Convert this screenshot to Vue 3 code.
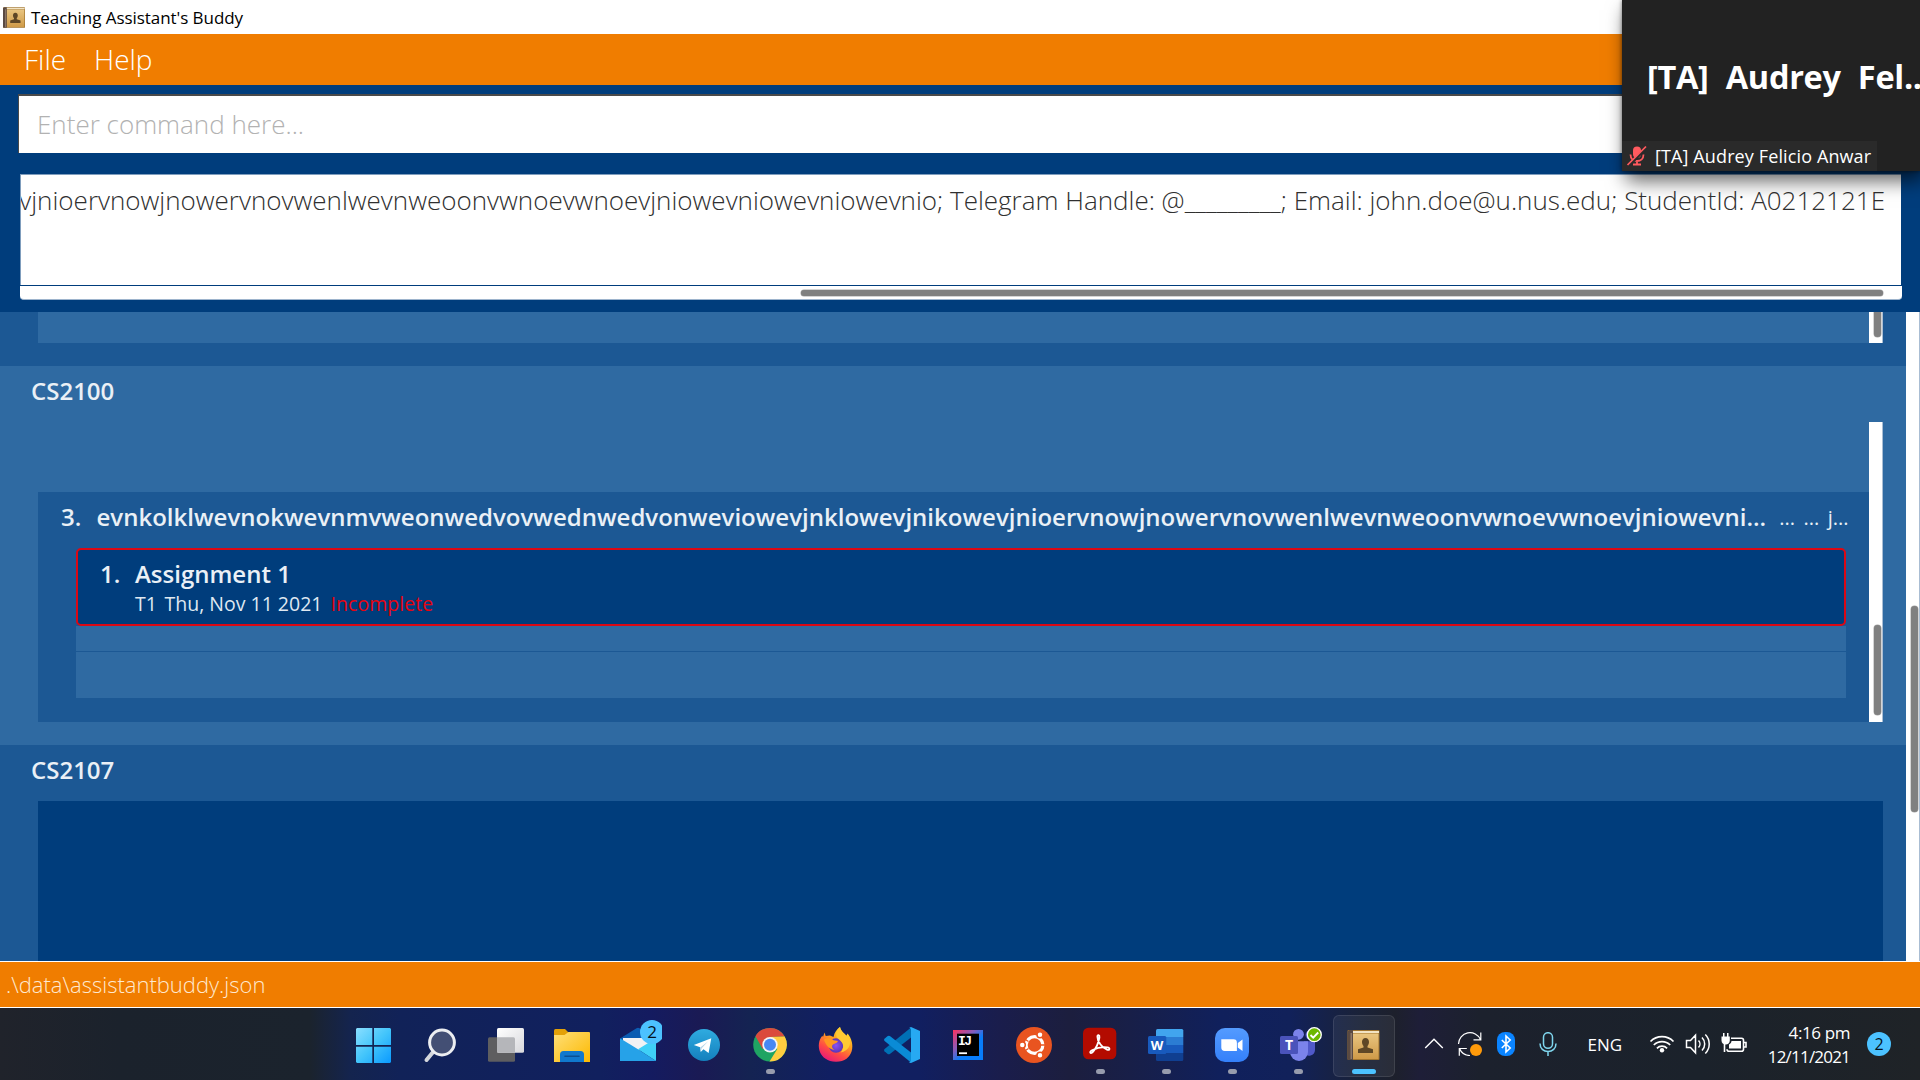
<script setup>
const result =
  'vjnioervnowjnowervnovwenlwevnweoonvwnoevwnoevjniowevniowevniowevnio; Telegram Handle: @_________; Email: john.doe@u.nus.edu; StudentId: A0212121E'
const student =
  'evnkolklwevnokwevnmvweonwedvovwednwedvonweviowevjnklowevjnikowevjnioervnowjnowervnovwenlwevnweoonvwnoevwnoevjniowevni...'
const tags = ['...', '...', 'j...']
</script>

<template>
  <div class="desktop">
    <header class="titlebar">
      <svg class="app-icon" width="22" height="21" viewBox="0 0 32 30">
        <use href="#book" />
      </svg>
      <span>Teaching Assistant's Buddy</span>
    </header>

    <nav class="menubar">
      <span class="menu-file">File</span>
      <span>Help</span>
    </nav>

    <section class="command">
      <div class="field">Enter command here...</div>
      <div class="result">
        <div class="result-text"><span>{{ result }}</span></div>
        <div class="hscroll"><i></i></div>
      </div>
    </section>

    <main class="modules">
      <div class="list">
        <div class="module first">
          <div class="strip"></div>
          <div class="vscroll"><i></i></div>
        </div>

        <div class="module second">
          <h2>CS2100</h2>
          <div class="students">
            <div class="student">
              <div class="student-head">
                <span class="num">3.</span>
                <span class="name">{{ student }}</span>
                <span v-for="(t, i) in tags" :key="i" class="tag">{{ t }}</span>
              </div>
              <div class="tasks">
                <div class="task">
                  <span class="num">1.</span>
                  <div>
                    <h3>Assignment 1</h3>
                    <p>
                      <span class="tag-name">T1</span><span class="date">Thu, Nov 11 2021</span><span class="state">Incomplete</span>
                    </p>
                  </div>
                </div>
                <div class="empty short"></div>
                <div class="empty"></div>
              </div>
            </div>
            <div class="vscroll"><i></i></div>
          </div>
        </div>

        <div class="module third">
          <h2>CS2107</h2>
          <div class="blank"></div>
        </div>
      </div>
      <div class="page-scroll"><i></i></div>
    </main>

    <footer class="status">.\data\assistantbuddy.json</footer>

    <div class="taskbar">
      <div class="apps">
        <div class="app">
          <svg viewBox="0 0 48 48">
            <defs>
              <linearGradient id="win" gradientUnits="userSpaceOnUse" x1="6" y1="8" x2="41" y2="43">
                <stop offset="0" stop-color="#8adfff" /><stop offset=".5" stop-color="#43c5fb" /><stop offset="1" stop-color="#0a9aff" />
              </linearGradient>
            </defs>
            <path fill="url(#win)" d="M7 8h15.3v17H6V9zM24 8h16l1 1v16H24zM6 26.8h16.3V43H7l-1-1zM24 26.8h17V42l-1 1H24z" />
          </svg>
        </div>
        <div class="app">
          <svg viewBox="0 0 48 48">
            <path d="M17.500 31.500 10.500 40" stroke="#d4d7dc" stroke-width="4" stroke-linecap="round" />
            <circle cx="26" cy="22.500" r="12.400" fill="#434f74" stroke="#eceef1" stroke-width="3" />
          </svg>
        </div>
        <div class="app">
          <svg viewBox="0 0 48 48">
            <defs>
              <linearGradient id="tv" x1="0" y1="0" x2="1" y2="1">
                <stop offset="0" stop-color="#fff" /><stop offset="1" stop-color="#d8d8dc" />
              </linearGradient>
            </defs>
            <rect x="6" y="17.300" width="27" height="24.500" rx="1.500" fill="#5e5e60" />
            <rect x="15" y="8" width="27" height="24.700" rx="1.500" fill="url(#tv)" />
            <path d="M15 17.300h16.500a1.500 1.500 0 0 1 1.500 1.500v13.900H16.500a1.500 1.500 0 0 1-1.500-1.500z" fill="#b5b6ba" />
          </svg>
        </div>
        <div class="app">
          <svg viewBox="0 0 48 48">
            <defs>
              <linearGradient id="fo" x1="0" y1="0" x2="1" y2="1">
                <stop offset="0" stop-color="#ffdf79" /><stop offset="1" stop-color="#fcb900" />
              </linearGradient>
            </defs>
            <path d="M6 10.500A1.500 1.500 0 0 1 7.500 9H17l4 4v6H6z" fill="#e3a008" />
            <path d="M6 15h10.500l4-3H41a1 1 0 0 1 1 1v29H6z" fill="url(#fo)" />
            <path d="M12 42V34.500A3.500 3.500 0 0 1 15.500 31h17a3.500 3.500 0 0 1 3.500 3.500V42z" fill="#1078cd" />
            <path d="M17 36.300h14" stroke="#0b4f92" stroke-width="1.600" stroke-linecap="round" />
          </svg>
        </div>
        <div class="app">
          <svg viewBox="0 0 48 48">
            <path d="M6 18.500 22.500 8.200a3 3 0 0 1 3 0L42 18.500 24 30z" fill="#0b5cb2" />
            <path d="M9 18h30v8L24 31 9 22z" fill="#f2f2f4" />
            <path d="M42 18.300 24 29.300 42 41z" fill="#3fd0f8" />
            <path d="M6 41V18.300L24 29.300 42 41z" fill="#26a2e8" />
            <circle cx="38" cy="12" r="12" fill="#4cc2ff" />
          </svg>
          <span class="badge">2</span>
        </div>
        <div class="app">
          <svg viewBox="0 0 48 48">
            <defs>
              <linearGradient id="tg" x1="0" y1="0" x2="0" y2="1">
                <stop offset="0" stop-color="#2fabe0" /><stop offset="1" stop-color="#1480bd" />
              </linearGradient>
            </defs>
            <circle cx="24" cy="25" r="16" fill="url(#tg)" />
            <path d="M13.800 25 31.300 18.300 28.600 33 23.500 29.200 20.700 31.900 20.200 27.200z" fill="#fff" />
            <path d="M20.300 27.400 28.200 21.300 21.700 28.300 20.800 31.600z" fill="#b5d5e8" />
          </svg>
        </div>
        <div class="app running">
          <svg viewBox="0 0 48 48">
            <circle cx="24" cy="24.700" r="16.800" fill="#1fa463" />
            <path d="M9.450 16.300A16.800 16.800 0 0 1 38.700 16.600L24 17 16.700 28.900z" fill="#db4a3d" />
            <path d="M38.700 16.600A16.800 16.800 0 0 1 23.500 41.500L31.300 28.900 24 17z" fill="#ffcd40" />
            <circle cx="24" cy="24.700" r="7.700" fill="#f4f4f4" />
            <circle cx="24" cy="24.700" r="6" fill="#4688f4" />
          </svg>
        </div>
        <div class="app">
          <svg viewBox="0 0 48 48">
            <defs>
              <linearGradient id="ff" x1=".85" y1="0" x2=".3" y2="1">
                <stop offset="0" stop-color="#fff23c" /><stop offset=".4" stop-color="#ffa21e" /><stop offset=".72" stop-color="#ff4a45" /><stop offset="1" stop-color="#e6197a" />
              </linearGradient>
              <radialGradient id="fg"><stop offset="0" stop-color="#8a52f5" /><stop offset="1" stop-color="#5b35b5" /></radialGradient>
            </defs>
            <path d="M12.500 12.400 13.700 16 18 15.600 21.500 17C22.500 12 25 9 28 7c1 5 4 6 6 9.500l1.600-3C44 23 42 41.700 24 41.700 7 41.700 3 24.500 10.300 15.800L11 17z" fill="url(#ff)" />
            <circle cx="24" cy="25.500" r="7.300" fill="url(#fg)" />
            <path d="M12 19.500c4-2.500 8-1 9.500.8l4.500.6c-1 2.500-4 2.400-5.500 4-1 1.300-.5 3.500 2 4.800-5.500 0-9-5-10.500-10.200z" fill="#ff9820" />
            <path d="M28 7c-4.500 4-5.500 9-1 12.500 5 3.500 5.500 9 1.500 13 8-1.500 11-8 9-14C35 15 29 12 28 7z" fill="#ffc932" />
          </svg>
        </div>
        <div class="app">
          <svg viewBox="0 0 48 48">
            <path d="M6.500 31.200 9.400 33.800a2 2 0 0 0 2.500.1L33 17.500V7.500L6.600 29a1.500 1.500 0 0 0-.1 2.200z" fill="#0070b5" />
            <path d="M6.500 18.800 9.400 16.200a2 2 0 0 1 2.500-.1L33 32.500v10L6.600 21a1.500 1.500 0 0 1-.1-2.200z" fill="#0a8bd6" />
            <path d="M33 7 42 11v28l-9 4c-1.500-.3-2.500-1.200-2.500-1.200.9.500 2.500.1 2.500-1.500V9.700c0-1.600-1.600-2-2.500-1.500z" fill="#27a9f2" />
          </svg>
        </div>
        <div class="app">
          <svg viewBox="0 0 48 48">
            <defs>
              <linearGradient id="ij" x1="0" y1="0" x2="1" y2="1">
                <stop offset="0" stop-color="#fe315d" /><stop offset=".35" stop-color="#8a5ab8" /><stop offset=".6" stop-color="#087cfa" /><stop offset="1" stop-color="#087cfa" />
              </linearGradient>
            </defs>
            <rect x="9" y="10" width="30" height="30" fill="url(#ij)" />
            <rect x="13" y="13.700" width="22" height="22.300" fill="#000" />
            <path d="M15 33.200h8" stroke="#fff" stroke-width="1.800" />
            <text class="mono" x="14" y="25.200" font-size="13" font-weight="700" textLength="14" fill="#fff">IJ</text>
          </svg>
        </div>
        <div class="app">
          <svg viewBox="0 0 48 48">
            <circle cx="24" cy="25" r="18" fill="#e95420" />
            <circle cx="24.500" cy="25" r="8.400" fill="none" stroke="#fff" stroke-width="3.200" />
            <g stroke="#e95420" stroke-width="1.500" fill="#fff">
              <circle cx="12.300" cy="25" r="3" /><circle cx="30" cy="14.800" r="3" /><circle cx="30" cy="35.200" r="3" />
            </g>
            <path d="M14.500 19 18.500 21.500M14.500 31 18.500 28.500M31 25h4.500" stroke="#e95420" stroke-width="1.300" />
          </svg>
        </div>
        <div class="app running">
          <svg viewBox="0 0 48 48">
            <rect x="7" y="7.700" width="33.300" height="31.600" rx="5.500" fill="#b30b00" />
            <path d="M14.500 31.500c-1 1.800 1 2.200 2.600.2 3-3.700 5.500-9.200 6.300-14.200.4-2.800-2-3.200-2-.8 0 4.800 4.500 11 9.600 13 3 1.100 3.400-2 .3-2.400-4.500-.5-10.500.5-14.700 2.700-1 .5-1.700 1-2.100 1.500z" fill="none" stroke="#fff" stroke-width="1.800" />
          </svg>
        </div>
        <div class="app running">
          <svg viewBox="0 0 48 48">
            <path d="M14 17V10.500A1.500 1.500 0 0 1 15.500 9h24.300a1.500 1.500 0 0 1 1.500 1.500V17z" fill="#41a5ee" />
            <path d="M14 17h27.300v8H14z" fill="#2b7cd3" />
            <path d="M14 25h27.300v8H14z" fill="#185abd" />
            <path d="M14 33h27.300v6.500a1.500 1.500 0 0 1-1.500 1.500H15.500a1.500 1.500 0 0 1-1.500-1.500z" fill="#103f91" />
            <rect x="6" y="16" width="18.300" height="18" rx="1.500" fill="#185abd" />
            <text x="15.100" y="29.700" text-anchor="middle" font-size="13" font-weight="700" fill="#fff">W</text>
          </svg>
        </div>
        <div class="app running">
          <svg viewBox="0 0 48 48">
            <defs>
              <linearGradient id="zm" x1="0" y1="0" x2="0" y2="1">
                <stop offset="0" stop-color="#549bff" /><stop offset="1" stop-color="#3480fa" />
              </linearGradient>
            </defs>
            <rect x="7" y="8" width="34" height="34" rx="10" fill="url(#zm)" />
            <path d="M13.300 19.300h12.200a3.400 3.400 0 0 1 3.400 3.400V31H16.700a3.400 3.400 0 0 1-3.400-3.400zM29.800 23l4.700-3.500v11.400L29.800 27.500z" fill="#fff" />
          </svg>
        </div>
        <div class="app running">
          <svg viewBox="0 0 48 48">
            <circle cx="36" cy="15" r="4.500" fill="#5059c9" />
            <path d="M30 21.300h11V30a6 6 0 0 1-11 3z" fill="#5059c9" />
            <circle cx="24.500" cy="14.300" r="5.400" fill="#7b83eb" />
            <path d="M16 21.300h18V32a9 9 0 0 1-18 0z" fill="#7b83eb" />
            <rect x="6" y="16" width="18" height="18" rx="1.500" fill="#4a53bb" />
            <text x="15" y="29.700" text-anchor="middle" font-size="14" font-weight="700" fill="#fff">T</text>
            <circle cx="40.300" cy="14.700" r="7" fill="#6bb700" stroke="#fff" stroke-width="1.300" />
            <path d="M36.500 15 39.200 17.700 44.200 12.500" fill="none" stroke="#fff" stroke-width="1.900" />
          </svg>
        </div>
        <div class="app active">
          <svg viewBox="0 0 48 48">
            <defs>
              <linearGradient id="bk" x1="0" y1="0" x2="0" y2="1">
                <stop offset="0" stop-color="#e9c580" /><stop offset="1" stop-color="#cf9a48" />
              </linearGradient>
              <g id="book">
                <rect width="32" height="30" rx="1" fill="#a1752f" />
                <path d="M5 3.500h26V29H5z" fill="url(#bk)" />
                <path d="M3 1h28.500v2H3z" fill="#f2e3c2" />
                <path d="M0 1 2 0h3.500v30H1l-1-1z" fill="#5a4a42" />
                <path d="M3 3h1.500v26H3z" fill="#8c7868" />
                <path d="M18 8c2.300 0 3.500 1.700 3.500 4 0 1.800-.7 3-1.500 3.900v1.600l5.500 1.800V23H10.500v-3.700l5.500-1.800v-1.600c-.8-.9-1.500-2.100-1.500-3.900 0-2.300 1.200-4 3.500-4z" fill="#5e4726" />
              </g>
            </defs>
            <use href="#book" x="7.500" y="10" />
          </svg>
        </div>
      </div>

      <div class="tray">
        <svg class="ic" width="36" viewBox="0 0 36 24"><path d="M9.200 16 18 7.300 26.800 16" fill="none" stroke="#fff" stroke-width="1.400" /></svg>
        <svg class="ic" width="36" viewBox="0 0 36 24">
          <path d="M6.500 12A11.500 11.500 0 0 1 28.500 7.500M28.800 0.500v7.300h-7.300M18 23.500A11.500 11.500 0 0 1 7.500 16.500M7.300 23.700v-7.200h7.500" fill="none" stroke="#fff" stroke-width="1.200" />
          <circle cx="24" cy="18" r="6" fill="#ff9a0a" />
        </svg>
        <svg class="ic" width="36" viewBox="0 0 36 24">
          <rect x="9" y="0" width="18" height="24" rx="8" fill="#0a84ff" />
          <path d="M13.800 8 22.200 16 18 20V4l4.200 4-8.400 8" fill="none" stroke="#fff" stroke-width="1.600" />
        </svg>
        <svg class="ic" width="48" viewBox="0 0 48 24">
          <rect x="19.500" y=".7" width="9" height="15.500" rx="4.500" fill="none" stroke="#7fd6ee" stroke-width="1.500" />
          <path d="M16 11.500c0 5 3.500 8 8 8s8-3 8-8M24 19.500V24" fill="none" stroke="#7fd6ee" stroke-width="1.500" />
        </svg>
        <span class="lang">ENG</span>
        <svg class="ic" width="36" viewBox="0 0 36 24">
          <g fill="none" stroke="#fff" stroke-width="1.700">
            <path d="M6.500 9.500A16.200 16.200 0 0 1 29.500 9.500M9.800 13A11.600 11.600 0 0 1 26.200 13M12.900 16.300A7.200 7.200 0 0 1 23.100 16.300" />
          </g>
          <circle cx="18" cy="18.300" r="2.200" fill="#fff" />
        </svg>
        <svg class="ic" width="36" viewBox="0 0 36 24">
          <path d="M6.500 8.500h4l5-5.300v17.600l-5-5.300h-4zM18.500 8.500a5 5 0 0 1 0 7M22 5.500a9.200 9.200 0 0 1 0 13M25.300 2.500a13.500 13.500 0 0 1 0 19" fill="none" stroke="#fff" stroke-width="1.500" />
        </svg>
        <svg class="ic" width="36" viewBox="1 0 36 24">
          <path d="M16 6.300h10.500a2 2 0 0 1 2 2v8.900a2 2 0 0 1-2 2H14a2 2 0 0 1-2-2M28.500 10.500H31v4.500h-2.500M9.500 12v8" fill="none" stroke="#fff" stroke-width="1.600" />
          <path d="M16.500 9h9.500v7.600H14V12.500c1.500-1 2.500-2 2.500-3.500zM6.500 4.500h8.300v4c0 2.500-1.800 4-4.100 4s-4.200-1.500-4.200-4zM8 1h1.500v4H8zM12 1h1.500v4H12z" fill="#fff" />
        </svg>
        <div class="clock"><span>4:16 pm</span><span class="day">12/11/2021</span></div>
        <span class="notif">2</span>
      </div>
    </div>

    <aside class="call">
      <strong>[TA] Audrey Fel...</strong>
      <div class="caption">
        <svg width="22" height="22" viewBox="0 0 22 22">
          <rect x="7" y="1.500" width="8" height="11.500" rx="4" fill="#ff5a5f" />
          <path d="M4.500 9.500c0 4 2.700 6.500 6.500 6.500s6.500-2.500 6.500-6.500M11 16v3M7 19.500h8" fill="none" stroke="#ff5a5f" stroke-width="1.800" />
          <path d="M3.500 20 21 2" stroke="#2a2a2a" stroke-width="3" />
          <path d="M1.500 20 20 1.500" stroke="#ff5a5f" stroke-width="1.700" />
        </svg>
        <span>[TA] Audrey Felicio Anwar</span>
      </div>
    </aside>
  </div>
</template>

<style scoped>
.desktop {
  position: relative;
  display: flex;
  flex-direction: column;
  width: 1920px;
  height: 1080px;
  overflow: hidden;
  background: #003d7c;
  font-family: "Open Sans", "Noto Sans", sans-serif;
  white-space: nowrap;
}
.desktop * { box-sizing: border-box; }
svg text { font-family: "Open Sans", sans-serif; }
svg .mono { font-family: "Liberation Mono", monospace; }

.titlebar {
  display: flex;
  align-items: center;
  gap: 6px;
  height: 34px;
  padding-left: 3px;
  background: #fff;
  color: #000;
  font-size: 17px;
  letter-spacing: -.06px;
  line-height: 34px;
}
.titlebar span { padding-top: 1px; }
.menubar {
  display: flex;
  height: 51px;
  padding-left: 24px;
  background: #f07d00;
  color: #fff;
  font-size: 28px;
  font-weight: 300;
  line-height: 51px;
}
.menu-file { width: 70px; }

.command {
  height: 227px;
  padding: 9px 18px 0;
}
.field {
  height: 59px;
  padding-left: 18px;
  border-top: 2px solid #4a4a4a;
  border-left: 1px solid #4a4a4a;
  background: #fff;
  color: #b2b2b2;
  font-size: 26px;
  font-weight: 300;
  line-height: 56px;
}
.result {
  width: 1882px;
  margin: 21px 0 0 2px;
}
.result-text {
  display: flex;
  justify-content: flex-end;
  width: 1881px;
  height: 111px;
  padding: 7px 16px 0 0;
  overflow: hidden;
  border-top: 1px solid #7f9dbd;
  border-left: 1px solid #7f9dbd;
  background: #fff;
  color: #303030;
  font-size: 26px;
  font-weight: 300;
  line-height: 36px;
}
.hscroll {
  display: flex;
  justify-content: flex-end;
  height: 14px;
  margin-top: 1px;
  padding: 4px 19px 0 0;
  border-bottom: 1px solid #9db4cd;
  border-radius: 0 0 4px 4px;
  background: #fff;
}
.hscroll i {
  width: 1082px;
  height: 6px;
  border-radius: 4px;
  background: #808080;
  box-shadow: 0 0 0 .5px #a9a9a9;
}

.modules {
  display: flex;
  height: 649px;
  overflow: hidden;
}
.list { width: 1906px; }
.module { padding-left: 38px; background: #1c5894; }
.first {
  display: flex;
  height: 54px;
}
.strip { width: 1831px; height: 31px; background: #2f6aa2; }
.vscroll {
  display: flex;
  justify-content: center;
  width: 14px;
  padding-left: 3px;
  border-right: 1px solid #a9bdd3;
  background: #fff;
}
.vscroll i {
  width: 7px;
  border-radius: 4px;
  background: #808080;
  box-shadow: 0 0 0 .5px #a9a9a9;
}
.first .vscroll { height: 31px; }
.first .vscroll i { height: 25px; border-radius: 0 0 4px 4px; }
.second { height: 379px; background: #2f6aa2; }
h2, h3, p { margin: 0; }
h2 {
  height: 56px;
  margin-left: -7px;
  padding-top: 7px;
  color: #eaf0f6;
  font-size: 24px;
  font-weight: 600;
  line-height: 36px;
}
.students { display: flex; height: 300px; }
.students .vscroll { padding-top: 203px; }
.students .vscroll i { height: 90px; }
.student {
  width: 1831px;
  height: 230px;
  margin-top: 70px;
  padding: 8px 20px 0 23px;
  background: #1c5894;
  color: #eaf0f6;
}
.student-head {
  display: flex;
  height: 48px;
  font-size: 24px;
  line-height: 34px;
}
.student-head .num { width: 35.500px; font-weight: 600; }
.name { margin-right: 13px; font-weight: 600; letter-spacing: .015px; }
.tag { margin-right: 8.500px; font-size: 20px; line-height: 36px; }
.tag:last-child { margin-right: 0; }
.tasks { width: 1770px; margin-left: 15px; }
.task {
  display: flex;
  height: 78px;
  padding: 8px 0 0 22px;
  border: 2px solid #dc0814;
  border-radius: 5px;
  background: #003d7c;
}
.task .num, .task h3 {
  font-size: 24px;
  font-weight: 600;
  line-height: 32px;
}
.task .num { width: 35px; }
.task p {
  color: #dfe8f1;
  font-size: 19.500px;
  line-height: 27px;
}
.tag-name { display: inline-block; width: 29.500px; }
.date { display: inline-block; width: 166px; }
.state { color: #e60410; letter-spacing: .05px; }
.empty { height: 46px; background: #2f6aa2; }
.short { height: 26px; border-bottom: 1px solid #1c5894; }
.third { height: 216px; }
.blank { width: 1845px; height: 160px; background: #003d7c; }
.page-scroll {
  width: 14px;
  padding: 294px 0 0 5px;
  border-right: 1px solid #a9bdd3;
  background: #fff;
}
.page-scroll i {
  display: block;
  width: 7px;
  height: 206px;
  border-radius: 4px;
  background: #808080;
  box-shadow: 0 0 0 .5px #a9a9a9;
}

.status {
  height: 47px;
  padding-left: 6px;
  border-top: 1px solid #fff;
  border-bottom: 1px solid #fff;
  background: #f07d00;
  color: #ffe9d0;
  font-size: 22px;
  font-weight: 300;
  line-height: 44px;
}

.taskbar {
  display: flex;
  height: 72px;
  background: linear-gradient(90deg, #20232b 0, #1b222c 120px, #1b232d 310px, #14244e 350px, #112258 400px, #11205e 600px, #141b60 650px, #1a1a54 700px, #142352 750px, #111f62 830px, #111f60 920px, #1a1d4c 1000px, #1c1e3e 1070px, #181f48 1130px, #10205c 1220px, #11215a 1290px, #1a2238 1360px, #1d202c 1395px, #1e1e38 1420px, #1c212d 1480px, #1b222b 1700px, #1f2327 1920px);
}
.apps { display: flex; width: 1075px; margin-left: 341px; }
.app {
  position: relative;
  display: flex;
  flex: none;
  justify-content: center;
  width: 66px;
  padding-top: 12px;
}
.app svg { width: 48px; height: 48px; flex: none; }
.running::after, .active::after {
  content: "";
  position: absolute;
  left: 29px;
  top: 61px;
  width: 9px;
  height: 5px;
  border-radius: 3px;
  background: #979cad;
}
.active::after { left: 21px; width: 24px; background: #4cc2ff; }
.active::before {
  content: "";
  position: absolute;
  left: 2px;
  top: 7px;
  width: 60px;
  height: 60px;
  border: 1px solid rgba(255, 255, 255, .1);
  border-radius: 6px;
  background: rgba(255, 255, 255, .06);
}
.app.active svg { position: relative; }
.badge {
  position: absolute;
  left: 35px;
  top: 12px;
  width: 24px;
  color: #06121c;
  font-size: 17px;
  line-height: 24px;
  text-align: center;
}
.tray {
  display: flex;
  align-items: center;
  color: #fff;
  font-size: 17px;
}
.ic { flex: none; height: 24px; }
.lang { width: 72px; padding-left: 15.500px; }
.clock {
  display: flex;
  flex-direction: column;
  align-items: flex-end;
  width: 98px;
  padding-top: 1px;
  font-size: 17px;
  letter-spacing: -.4px;
  line-height: 23.500px;
}
.day { letter-spacing: -.8px; }
.notif {
  width: 24px;
  height: 24px;
  margin-left: 17px;
  border-radius: 50%;
  background: #4cc2ff;
  color: #06121c;
  font-size: 16px;
  line-height: 24px;
  text-align: center;
}

.call {
  position: absolute;
  left: 1622px;
  top: 0;
  width: 298px;
  height: 171px;
  background: #222;
  box-shadow: 4px 10px 18px rgba(0, 0, 0, .6), 0 0 4px rgba(0, 0, 0, .5);
  color: #fff;
}
.call strong {
  display: block;
  height: 141px;
  padding: 54px 0 0 25px;
  overflow: hidden;
  font-size: 32.500px;
  font-weight: 700;
  letter-spacing: -.3px;
  line-height: 46px;
  word-spacing: 9px;
}
.caption {
  display: flex;
  align-items: center;
  gap: 7px;
  width: 255px;
  height: 30px;
  padding-left: 4px;
  background: #2a2a2a;
  font-size: 18px;
  letter-spacing: .12px;
}
</style>
